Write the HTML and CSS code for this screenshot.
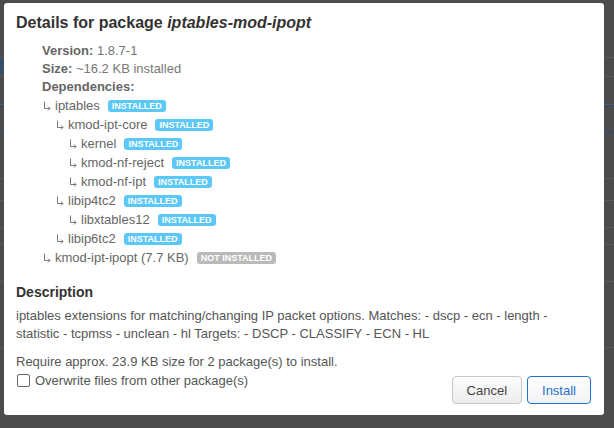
FILE: index.html
```html
<!DOCTYPE html>
<html>
<head>
<meta charset="utf-8">
<link rel="stylesheet" href="styles.css">
</head>
<body>
<div class="page">
  <div class="bg-row r1"><span class="side-tab"></span></div>
  <div class="bg-row r2"></div>
  <div class="bg-row r3"></div>
  <div class="bg-row r4 blue"></div>
  <div class="bg-row r5"></div>
  <div class="bg-row r6"></div>
  <div class="bg-row r7"></div>
  <div class="bg-row r8"></div>
  <div class="bg-row r9"></div>
  <div class="bg-row r10"></div>
</div>
<div class="overlay">
  <div class="modal">
    <h4 class="title">Details for package <em>iptables-mod-ipopt</em></h4>
    <ul class="info">
      <li><strong>Version:</strong> 1.8.7-1</li>
      <li><strong>Size:</strong> ~16.2 KB installed</li>
      <li><strong>Dependencies:</strong>
        <ul class="deps">
          <li><div class="dep"><svg class="arrow" viewBox="0 0 8 10"><path d="M1.5 0.5V7.5H7M5 5.5L7 7.5L5 9.5"/></svg>iptables<span class="badge">INSTALLED</span></div>
            <ul class="deps">
              <li><div class="dep"><svg class="arrow" viewBox="0 0 8 10"><path d="M1.5 0.5V7.5H7M5 5.5L7 7.5L5 9.5"/></svg>kmod-ipt-core<span class="badge">INSTALLED</span></div>
                <ul class="deps">
                  <li><div class="dep"><svg class="arrow" viewBox="0 0 8 10"><path d="M1.5 0.5V7.5H7M5 5.5L7 7.5L5 9.5"/></svg>kernel<span class="badge">INSTALLED</span></div></li>
                  <li><div class="dep"><svg class="arrow" viewBox="0 0 8 10"><path d="M1.5 0.5V7.5H7M5 5.5L7 7.5L5 9.5"/></svg>kmod-nf-reject<span class="badge">INSTALLED</span></div></li>
                  <li><div class="dep"><svg class="arrow" viewBox="0 0 8 10"><path d="M1.5 0.5V7.5H7M5 5.5L7 7.5L5 9.5"/></svg>kmod-nf-ipt<span class="badge">INSTALLED</span></div></li>
                </ul>
              </li>
              <li><div class="dep"><svg class="arrow" viewBox="0 0 8 10"><path d="M1.5 0.5V7.5H7M5 5.5L7 7.5L5 9.5"/></svg>libip4tc2<span class="badge">INSTALLED</span></div>
                <ul class="deps">
                  <li><div class="dep"><svg class="arrow" viewBox="0 0 8 10"><path d="M1.5 0.5V7.5H7M5 5.5L7 7.5L5 9.5"/></svg>libxtables12<span class="badge">INSTALLED</span></div></li>
                </ul>
              </li>
              <li><div class="dep"><svg class="arrow" viewBox="0 0 8 10"><path d="M1.5 0.5V7.5H7M5 5.5L7 7.5L5 9.5"/></svg>libip6tc2<span class="badge">INSTALLED</span></div></li>
            </ul>
          </li>
          <li><div class="dep"><svg class="arrow" viewBox="0 0 8 10"><path d="M1.5 0.5V7.5H7M5 5.5L7 7.5L5 9.5"/></svg>kmod-ipt-ipopt (7.7 KB)<span class="badge off">NOT INSTALLED</span></div></li>
        </ul>
      </li>
    </ul>
    <h5 class="desc-title">Description</h5>
    <p class="desc">iptables extensions for matching/changing IP packet options. Matches: - dscp - ecn - length - statistic - tcpmss - unclean - hl Targets: - DSCP - CLASSIFY - ECN - HL</p>
    <p class="require">Require approx. 23.9 KB size for 2 package(s) to install.</p>
    <div class="footer">
      <label class="check"><input type="checkbox" class="cb">Overwrite files from other package(s)</label>
      <div class="buttons">
        <button class="btn">Cancel</button>
        <button class="btn primary">Install</button>
      </div>
    </div>
  </div>
</div>
</body>
</html>
```
FILE: styles.css
```css
html, body {
  margin: 0;
  padding: 0;
}
body {
  width: 614px;
  height: 428px;
  overflow: hidden;
  background: #4c4c4c;
  font-family: "Liberation Sans", Arial, sans-serif;
  font-size: 13px;
  position: relative;
}
.page {
  display: flex;
  flex-direction: column;
}
.bg-row {
  border-bottom: 1px solid #5a5a5a;
  position: relative;
}
.r1 { height: 57px; }
.r2 { height: 18px; }
.r3 { height: 27px; }
.r4 { height: 26px; }
.r5 { height: 45px; }
.r6 { height: 21px; }
.r7 { height: 26px; }
.r8 { height: 16px; }
.r9 { height: 36px; }
.r10 { height: 65px; }
.blue {
  border-top: 1px solid #2c4a70;
  border-bottom-color: #2c4a70;
}
.side-tab {
  position: absolute;
  left: 0;
  top: 58px;
  width: 3px;
  height: 17px;
  background: #33506e;
}
.overlay {
  position: absolute;
  left: 4px;
  top: 3px;
}
.modal {
  width: 575px;
  height: 389px;
  padding: 10px 13px 13px 12px;
  background: #fff;
  border-radius: 3px;
  display: flex;
  flex-direction: column;
  color: #555;
}
.title {
  margin: 0;
  font-size: 16px;
  line-height: 19px;
  font-weight: bold;
  color: #333;
}
.title em {
  font-style: italic;
}
.info {
  list-style: none;
  margin: 10px 0 0 0;
  padding: 0 0 0 26px;
  line-height: 18px;
  color: #777;
}
.info strong {
  color: #666;
}
.deps {
  list-style: none;
  margin: 0;
  padding: 0;
  color: #666;
}
.deps .deps {
  padding-left: 13px;
}
.dep {
  display: flex;
  align-items: center;
  height: 19px;
  white-space: nowrap;
}
.arrow {
  width: 8px;
  height: 10px;
  margin: 0 4px 0 1px;
  fill: none;
  stroke: #777;
  stroke-width: 1;
}
.badge {
  display: inline-block;
  margin-left: 8px;
  height: 12px;
  line-height: 12px;
  padding: 0 4px;
  border-radius: 3px;
  background: #5bc8f8;
  color: #fff;
  font-size: 9px;
  font-weight: bold;
}
.badge.off {
  background: #bababa;
}
.desc-title {
  margin: 17px 0 0 0;
  font-size: 14px;
  line-height: 17px;
  font-weight: bold;
  color: #333;
}
.desc {
  margin: 6px 0 0 0;
  width: 560px;
  line-height: 18px;
}
.require {
  margin: 10px 0 0 0;
  line-height: 18px;
}
.footer {
  display: flex;
  justify-content: space-between;
  align-items: flex-start;
}
.check {
  display: flex;
  align-items: center;
  height: 18px;
}
.cb {
  appearance: none;
  -webkit-appearance: none;
  width: 13px;
  height: 13px;
  margin: 0 5px 0 1px;
  border: 1px solid #666;
  border-radius: 2px;
  background: #fff;
}
.buttons {
  display: flex;
  gap: 5px;
  margin-top: 5px;
}
.btn {
  height: 28px;
  padding: 0 14px;
  border: 1px solid #c8c8c8;
  border-radius: 4px;
  background: linear-gradient(#fdfdfd, #ececec);
  color: #444;
  font-family: "Liberation Sans", Arial, sans-serif;
  font-size: 13px;
}
.btn.primary {
  border-color: #1f6fd0;
  background: linear-gradient(#ffffff, #f2f2f2);
  color: #1f6fd0;
}
```
